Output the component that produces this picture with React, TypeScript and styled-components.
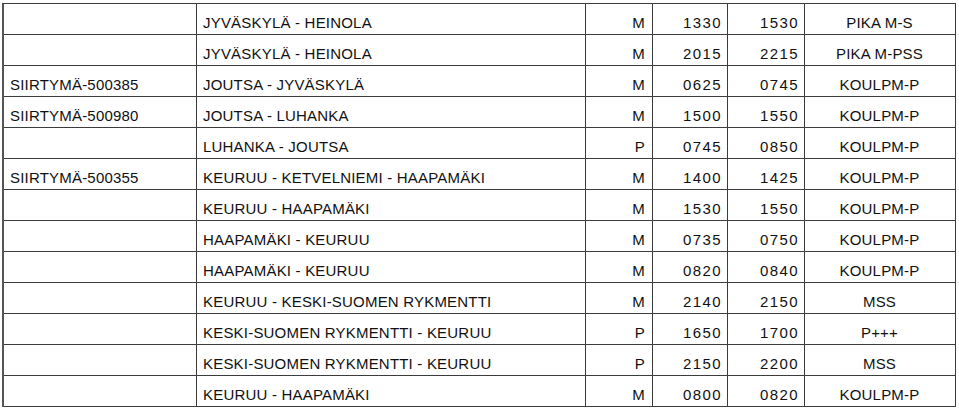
import React from 'react';
import styled, {createGlobalStyle} from 'styled-components';

const GlobalStyle = createGlobalStyle`
    html, body {
        margin: 0;
        padding: 0;
        background: #fff;
    }
    body {
        font-family: "Liberation Sans", Arial, sans-serif;
        color: #111;
    }
`;

const Table = styled.div`
    display: grid;
    grid-template-columns: 193px 389px 67px 75px 77px 151px;
    width: max-content;
    margin: 3px 0 0 2px;
    border-top: 1px solid #3c3c3c;
    border-left: 2px solid #555;
`;

type Align = 'left' | 'right' | 'center';

const Cell = styled.div<{ $align?: Align; $num?: boolean }>`
    box-sizing: border-box;
    height: 31px;
    padding: 10px ${p => (p.$num ? '5px' : '7px')} 0 6px;
    border-right: 1px solid #3c3c3c;
    border-bottom: 1px solid #3c3c3c;
    font-size: 15px;
    line-height: 17px;
    letter-spacing: ${p => (p.$num ? '1.4px' : '0.2px')};
    white-space: nowrap;
    overflow: hidden;
    text-align: ${p => p.$align || 'left'};
`;

const rows = [
    ['', 'JYVÄSKYLÄ - HEINOLA', 'M', '1330', '1530', 'PIKA M-S'],
    ['', 'JYVÄSKYLÄ - HEINOLA', 'M', '2015', '2215', 'PIKA M-PSS'],
    ['SIIRTYMÄ-500385', 'JOUTSA - JYVÄSKYLÄ', 'M', '0625', '0745', 'KOULPM-P'],
    ['SIIRTYMÄ-500980', 'JOUTSA - LUHANKA', 'M', '1500', '1550', 'KOULPM-P'],
    ['', 'LUHANKA - JOUTSA', 'P', '0745', '0850', 'KOULPM-P'],
    ['SIIRTYMÄ-500355', 'KEURUU - KETVELNIEMI - HAAPAMÄKI', 'M', '1400', '1425', 'KOULPM-P'],
    ['', 'KEURUU - HAAPAMÄKI', 'M', '1530', '1550', 'KOULPM-P'],
    ['', 'HAAPAMÄKI - KEURUU', 'M', '0735', '0750', 'KOULPM-P'],
    ['', 'HAAPAMÄKI - KEURUU', 'M', '0820', '0840', 'KOULPM-P'],
    ['', 'KEURUU - KESKI-SUOMEN RYKMENTTI', 'M', '2140', '2150', 'MSS'],
    ['', 'KESKI-SUOMEN RYKMENTTI - KEURUU', 'P', '1650', '1700', 'P+++'],
    ['', 'KESKI-SUOMEN RYKMENTTI - KEURUU', 'P', '2150', '2200', 'MSS'],
    ['', 'KEURUU - HAAPAMÄKI', 'M', '0800', '0820', 'KOULPM-P'],
];

const aligns: Align[] = ['left', 'left', 'right', 'right', 'right', 'center'];

export default function App() {
    return (
        <>
            <GlobalStyle/>
            <Table>
                {rows.map((row, i) =>
                    row.map((text, j) => (
                        <Cell key={i + '-' + j} $align={aligns[j]} $num={j === 3 || j === 4}>{text}</Cell>
                    ))
                )}
            </Table>
        </>
    );
}
